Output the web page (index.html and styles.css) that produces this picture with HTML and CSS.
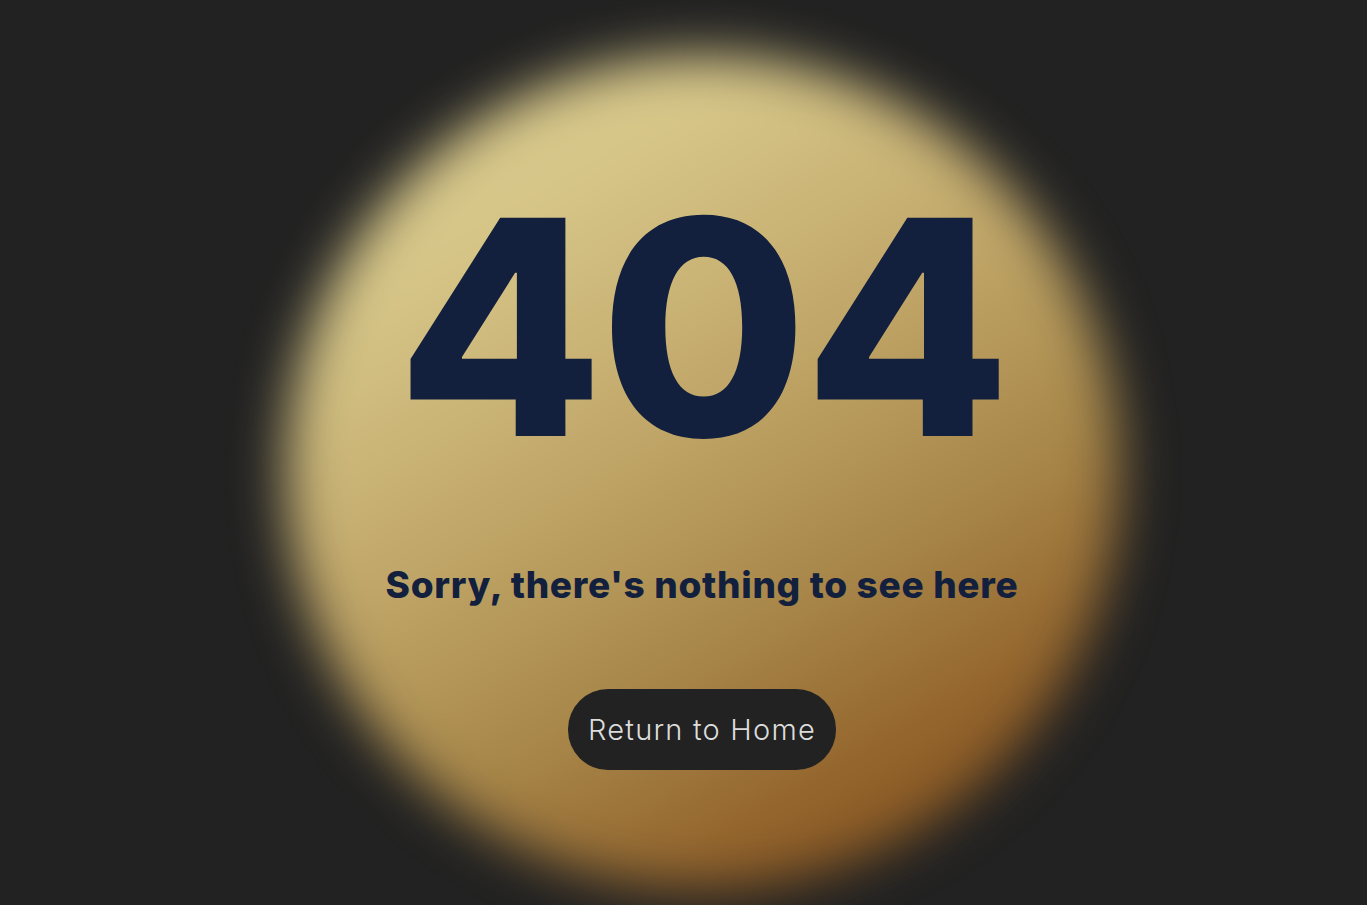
FILE: index.html
```html
<!DOCTYPE html>
<html lang="en">
<head>
<meta charset="utf-8">
<title>404 - Not Found</title>
<link rel="stylesheet" href="styles.css">
</head>
<body>
<main class="page">
  <div class="glow" aria-hidden="true"></div>
  <section class="content">
    <h1 class="code">404</h1>
    <p class="message">Sorry, there's nothing to see here</p>
    <a class="home-btn" href="#">Return to Home</a>
  </section>
</main>
</body>
</html>
```
FILE: styles.css
```css
html, body {
  margin: 0;
  padding: 0;
  height: 100%;
}

body {
  background: #222222;
  overflow: hidden;
  font-family: "Inter", "Noto Sans", sans-serif;
}

.page {
  position: relative;
  height: 905px;
  padding-left: 37px;
  box-sizing: border-box;
}

.glow {
  position: absolute;
  left: 286px;
  top: 55px;
  width: 834px;
  height: 834px;
  border-radius: 50%;
  background: linear-gradient(150deg, #dccd90 0%, #d6c688 22%, #c3aa6c 42%, #aa8a4c 62%, #905f28 82%, #7a4a17 100%);
  filter: blur(26px);
}

.content {
  position: relative;
  display: flex;
  flex-direction: column;
  align-items: center;
  padding-top: 177px;
}

.code {
  margin: 0;
  font-family: "Inter", sans-serif;
  font-weight: 800;
  font-size: 300px;
  line-height: 1;
  color: #121f3d;
  letter-spacing: -3.5px;
}

.message {
  margin: 89px 0 0;
  font-family: "Inter", sans-serif;
  font-weight: 800;
  font-size: 37px;
  line-height: 1;
  color: #121f3d;
  letter-spacing: 0.7px;
}

.home-btn {
  margin-top: 86px;
  display: flex;
  align-items: center;
  justify-content: center;
  height: 81px;
  padding: 0 20px;
  box-sizing: border-box;
  border-radius: 40px;
  background: #222222;
  color: #dcdcdc;
  font-family: "Inter", sans-serif;
  font-weight: 300;
  font-size: 29px;
  letter-spacing: 1.2px;
  text-decoration: none;
}
```
